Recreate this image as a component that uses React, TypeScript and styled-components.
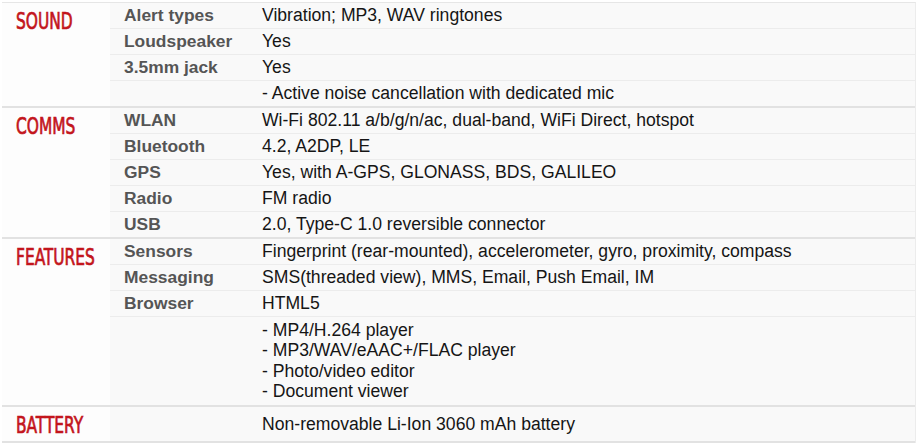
import styled, { createGlobalStyle } from "styled-components";

const GlobalStyle = createGlobalStyle`
  html, body { margin: 0; padding: 0; background: #ffffff; }
  body { font-family: "Liberation Sans", Arial, sans-serif; }
`;

interface Spec {
  label: string;
  lines: string[];
}

interface Section {
  title: string;
  specs: Spec[];
}

const SECTIONS: Section[] = [
  {
    title: "SOUND",
    specs: [
      { label: "Alert types", lines: ["Vibration; MP3, WAV ringtones"] },
      { label: "Loudspeaker", lines: ["Yes"] },
      { label: "3.5mm jack", lines: ["Yes"] },
      { label: "", lines: ["- Active noise cancellation with dedicated mic"] },
    ],
  },
  {
    title: "COMMS",
    specs: [
      { label: "WLAN", lines: ["Wi-Fi 802.11 a/b/g/n/ac, dual-band, WiFi Direct, hotspot"] },
      { label: "Bluetooth", lines: ["4.2, A2DP, LE"] },
      { label: "GPS", lines: ["Yes, with A-GPS, GLONASS, BDS, GALILEO"] },
      { label: "Radio", lines: ["FM radio"] },
      { label: "USB", lines: ["2.0, Type-C 1.0 reversible connector"] },
    ],
  },
  {
    title: "FEATURES",
    specs: [
      {
        label: "Sensors",
        lines: ["Fingerprint (rear-mounted), accelerometer, gyro, proximity, compass"],
      },
      { label: "Messaging", lines: ["SMS(threaded view), MMS, Email, Push Email, IM"] },
      { label: "Browser", lines: ["HTML5"] },
      {
        label: "",
        lines: [
          "- MP4/H.264 player",
          "- MP3/WAV/eAAC+/FLAC player",
          "- Photo/video editor",
          "- Document viewer",
        ],
      },
    ],
  },
  {
    title: "BATTERY",
    specs: [{ label: "", lines: ["Non-removable Li-Ion 3060 mAh battery"] }],
  },
];

const Table = styled.div`
  margin: 2px 4px 0 2px;
  background: #f9f9f9;
  border-top: 1px solid #e6e6e6;
  border-right: 1px solid #ececec;
`;

const SectionBlock = styled.div`
  display: flex;
  border-bottom: 2px solid #e2e2e2;
`;

const Category = styled.div`
  width: 108px;
  flex: none;
  background: #fdfdfd;
  padding: 5px 0 3px 14px;
  box-sizing: border-box;
  min-height: 34px;
`;

const CategoryTitle = styled.div`
  font-family: "DejaVu Sans Condensed", "Liberation Sans", sans-serif;
  font-size: 23.5px;
  line-height: 26px;
  color: #c3151c;
  -webkit-text-stroke: 0.7px #c3151c;
  transform: scaleX(0.73);
  transform-origin: left center;
  white-space: nowrap;
`;

const Rows = styled.div`
  flex: 1;
  display: flex;
  flex-direction: column;
  justify-content: center;
`;

const Row = styled.div`
  display: grid;
  grid-template-columns: 145px 1fr;
  border-bottom: 1px solid #ececec;
  &:last-child {
    border-bottom: none;
  }
`;

const Label = styled.div`
  padding-left: 14px;
  font-weight: bold;
  font-size: 17.4px;
  line-height: 25px;
  color: #555555;
`;

const Value = styled.div<{ $multi: boolean }>`
  padding: ${(p) => (p.$multi ? "3px 0 4px 7px" : "0 0 0 7px")};
  font-size: 17.6px;
  line-height: ${(p) => (p.$multi ? "20.3px" : "25px")};
  color: #151515;
`;

export default function App() {
  return (
    <>
      <GlobalStyle />
      <Table>
        {SECTIONS.map((section) => (
          <SectionBlock key={section.title}>
            <Category>
              <CategoryTitle>{section.title}</CategoryTitle>
            </Category>
            <Rows>
              {section.specs.map((spec, i) => (
                <Row key={i}>
                  <Label>{spec.label}</Label>
                  <Value $multi={spec.lines.length > 1}>
                    {spec.lines.map((line) => (
                      <div key={line}>{line}</div>
                    ))}
                  </Value>
                </Row>
              ))}
            </Rows>
          </SectionBlock>
        ))}
      </Table>
    </>
  );
}
